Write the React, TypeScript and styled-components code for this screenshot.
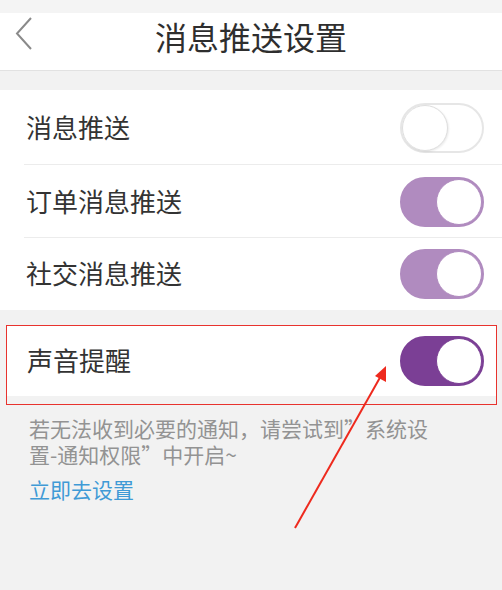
import * as React from 'react';
import styled, { createGlobalStyle } from 'styled-components';

const GlobalStyle = createGlobalStyle`
  html, body {
    margin: 0;
    padding: 0;
    background: #f2f2f2;
    font-family: "Noto Sans CJK SC", "Noto Sans", sans-serif;
  }
`;

const Page = styled.div`
  position: relative;
  width: 502px;
  height: 590px;
  background: #f2f2f2;
  overflow: hidden;
`;

const StatusStrip = styled.div`
  height: 13px;
  background: #f4f4f4;
`;

const Header = styled.div`
  position: relative;
  height: 58px;
  box-sizing: border-box;
  padding-top: 4px;
  background: #fff;
  border-bottom: 1px solid #e2e2e2;
  display: flex;
  align-items: flex-start;
  justify-content: center;
`;

const BackButton = styled.div`
  position: absolute;
  left: 12px;
  top: 4px;
  width: 24px;
  height: 34px;
  display: flex;
  align-items: center;
  justify-content: center;
`;

const Title = styled.h1`
  margin: 0;
  font-size: 32px;
  font-weight: 400;
  color: #2e2e2e;
  letter-spacing: 0;
  line-height: 1.2;
`;

const Group = styled.div<{ $top: number }>`
  margin-top: ${(p) => p.$top}px;
  background: #fff;
`;

const Row = styled.div<{ $height: number; $divider?: boolean }>`
  position: relative;
  height: ${(p) => p.$height}px;
  display: flex;
  align-items: center;
  justify-content: space-between;
  padding: 0 18px 0 26px;
  &::after {
    content: '';
    display: ${(p) => (p.$divider ? 'block' : 'none')};
    position: absolute;
    left: 24px;
    right: 0;
    bottom: 0;
    height: 1px;
    background: #ececec;
  }
`;

const Label = styled.span`
  font-size: 26px;
  color: #333;
  line-height: 1;
  padding-bottom: 2px;
`;

const Track = styled.div<{ $on: boolean; $color: string }>`
  position: relative;
  width: 84px;
  height: 50px;
  box-sizing: border-box;
  border-radius: 25px;
  background: ${(p) => (p.$on ? p.$color : '#fff')};
  border: 2px solid ${(p) => (p.$on ? p.$color : '#e6e6e6')};
`;

const Knob = styled.div<{ $on: boolean; $color: string }>`
  position: absolute;
  top: 0;
  ${(p) => (p.$on ? 'right: 0;' : 'left: 0;')}
  width: 46px;
  height: 46px;
  box-sizing: border-box;
  border-radius: 50%;
  background: #fff;
  border: 1px solid ${(p) => (p.$on ? p.$color : '#dedede')};
  box-shadow: ${(p) => (p.$on ? 'none' : '1px 1px 2px rgba(0,0,0,0.08)')};
`;

const Highlight = styled.div`
  margin: 15px 5px 0 6px;
  border: 1.5px solid #e8332e;
  padding-bottom: 8px;
`;

const Hint = styled.p`
  margin: 10px 0 0 29px;
  width: 410px;
  font-size: 21px;
  line-height: 26px;
  color: #939393;
`;

const Link = styled.a`
  display: block;
  margin: 7px 0 0 29px;
  font-size: 21px;
  color: #3f9ad6;
  text-decoration: none;
`;

const ArrowLayer = styled.svg`
  position: absolute;
  left: 0;
  top: 0;
  pointer-events: none;
`;

function Toggle({ on, color }: { on: boolean; color: string }) {
  return (
    <Track $on={on} $color={color}>
      <Knob $on={on} $color={color} />
    </Track>
  );
}

const rows = [
  { label: '消息推送', on: false, height: 75 },
  { label: '订单消息推送', on: true, height: 73 },
  { label: '社交消息推送', on: true, height: 72 },
];

export default function App() {
  return (
    <Page>
      <GlobalStyle />
      <StatusStrip />
      <Header>
        <BackButton>
          <svg width="20" height="34" viewBox="0 0 20 34">
            <polyline points="17,1 3,16.5 17,32" fill="none" stroke="#8a8a8a" strokeWidth="2" />
          </svg>
        </BackButton>
        <Title>消息推送设置</Title>
      </Header>
      <Group $top={19}>
        {rows.map((r, i) => (
          <Row key={r.label} $height={r.height} $divider={i < rows.length - 1}>
            <Label>{r.label}</Label>
            <Toggle on={r.on} color="#b08bbf" />
          </Row>
        ))}
      </Group>
      <Highlight>
        <Group $top={0}>
          <Row $height={70} style={{ paddingLeft: 20, paddingRight: 12 }}>
            <Label>声音提醒</Label>
            <Toggle on color="#7b3f95" />
          </Row>
        </Group>
      </Highlight>
      <Hint>若无法收到必要的通知，请尝试到”系统设置-通知权限”中开启~</Hint>
      <Link>立即去设置</Link>
      <ArrowLayer width="502" height="590" viewBox="0 0 502 590">
        <line x1="295" y1="528" x2="382" y2="374" stroke="#ee2a1e" strokeWidth="2" />
        <polygon points="386,366 375,376 386,382" fill="#ee2a1e" />
      </ArrowLayer>
    </Page>
  );
}
